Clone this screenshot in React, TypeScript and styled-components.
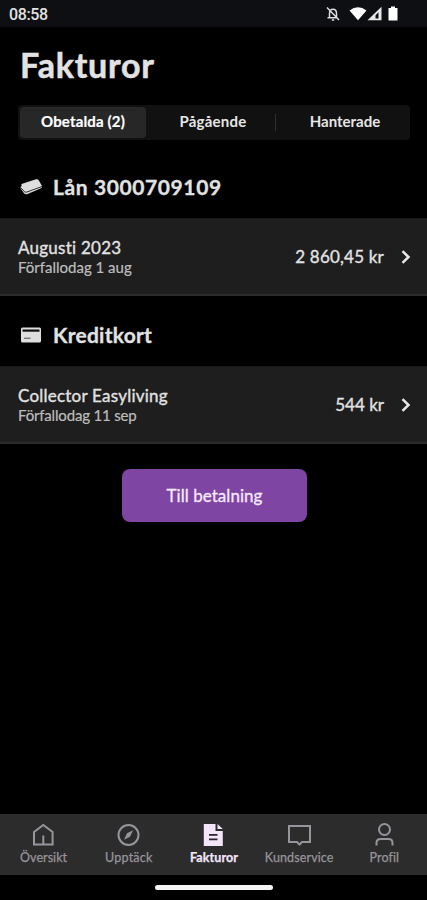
import React from "react";
import styled, { createGlobalStyle } from "styled-components";

const Global = createGlobalStyle`
  * { box-sizing: border-box; }
  body { margin: 0; background: #000; }
  button { font: inherit; border: 0; padding: 0; background: none; color: inherit; }
`;

const Screen = styled.div`
  width: 427px;
  height: 900px;
  display: flex;
  flex-direction: column;
  background: #000;
  color: #e2e2e2;
  font-family: Lato, "Open Sans", sans-serif;
  font-variant-ligatures: none;
  overflow: hidden;
`;

const StatusBar = styled.header`
  height: 27px;
  flex: none;
  display: flex;
  align-items: center;
  justify-content: space-between;
  padding: 1px 29px 0 9px;
  background: #0d0f12;
  font-family: Roboto, sans-serif;
`;

const Text = styled.span<{
  $size: number;
  $weight?: number;
  $spacing?: number;
  $line?: number;
  $color?: string;
  $stroke?: number;
}>`
  font-size: ${(p) => p.$size}px;
  font-weight: ${(p) => p.$weight ?? 400};
  letter-spacing: ${(p) => p.$spacing ?? 0}px;
  line-height: ${(p) => (p.$line ? `${p.$line}px` : "normal")};
  color: ${(p) => p.$color ?? "inherit"};
  -webkit-text-stroke: ${(p) => p.$stroke ?? 0}px currentColor;
  white-space: nowrap;
`;

const Main = styled.main`
  flex: 1;
  display: flex;
  flex-direction: column;
`;

const Title = styled.h1`
  margin: 0;
  height: 78px;
  padding: 0 20px 3px;
  display: flex;
  align-items: center;
`;

const Tabs = styled.div`
  height: 35px;
  margin: 0 17px 0 18px;
  padding: 2px 0 2px 2px;
  display: grid;
  grid-template-columns: 126px 1fr 1fr;
  border-radius: 4px;
  background: #111;
`;

const Tab = styled.button<{ $active?: boolean; $divided?: boolean }>`
  display: flex;
  align-items: center;
  justify-content: center;
  padding: 0 0 3px ${(p) => (p.$active ? 0 : 2)}px;
  border-radius: 4px;
  background: ${(p) => (p.$active ? "#272727" : "transparent")};
  color: ${(p) => (p.$active ? "#fff" : "#e6e6e6")};
  position: relative;
  &::after {
    content: "";
    position: absolute;
    top: 7px;
    right: 2px;
    height: 17px;
    width: 1px;
    background: ${(p) => (p.$divided ? "#303030" : "transparent")};
  }
`;

const SectionHead = styled.h2<{ $height: number; $top: number }>`
  margin: 0;
  height: ${(p) => p.$height}px;
  padding: ${(p) => p.$top}px 20px 0;
  display: flex;
  align-items: center;
  gap: 10px;
  svg { flex: none; }
`;

const Row = styled.div`
  height: 78px;
  padding: 0 15px 0 18px;
  display: flex;
  align-items: center;
  background: #1e1e1e;
  border-top: 1px solid #191919;
  border-bottom: 2px solid #2b2b2b;
`;

const RowLabel = styled.div`
  flex: 1;
  display: flex;
  flex-direction: column;
`;

const Chevron = styled.svg`
  margin-left: 16px;
`;

const PayButton = styled.button`
  width: 185px;
  height: 53px;
  margin: 25px 0 0 122px;
  display: flex;
  align-items: center;
  justify-content: center;
  border-radius: 8px;
  background: #7f45a2;
`;

const Nav = styled.nav`
  height: 61px;
  flex: none;
  padding-left: 1px;
  display: grid;
  grid-template-columns: repeat(5, 1fr);
  background: #2c2c2c;
`;

const NavItem = styled.button<{ $active?: boolean }>`
  display: flex;
  flex-direction: column;
  align-items: center;
  padding-top: 8px;
  gap: 3px;
  color: ${(p) => (p.$active ? "#f3e6fa" : "#97949b")};
`;

const HomeArea = styled.footer`
  height: 25px;
  flex: none;
  display: flex;
  justify-content: center;
  padding-top: 10px;
`;

const HomeBar = styled.div`
  width: 118px;
  height: 5px;
  border-radius: 3px;
  background: #f5f5f5;
`;

const StatusIcons = () => (
  <svg width="73" height="18" viewBox="0 0 73 18">
    <g fill="none" stroke="#ddd" strokeWidth="1.5">
      <path d="M4.500 12.500V8.500C4.500 5.500 6 4.200 8 4.200s3.500 1.300 3.500 4.300v4M2.500 12.800H12M2 2.500l12 12.500" />
      <path d="M6.800 15h2.400" />
    </g>
    <path d="M24.500 5.500Q33-1 41.500 5.500L33 15.200Z" fill="#fff" />
    <path fillRule="evenodd" d="M42.500 15.200 56.500 1.700v13.500ZM50.500 13.500h3V7.300L50.500 10.300Z" fill="#e8e8e8" />
    <path d="M63.500 3H66V1.500h4V3h2.500v12.500h-9Z" fill="#fff" />
  </svg>
);

const LoanIcon = () => (
  <svg width="23" height="18" viewBox="0 0 23 18">
    <path d="M1.500 6 16 1.300q2-.5 2.700 1L22 8q.6 1.500-1 2.200L7 16.200q-1.800.5-3-1L.6 10.500Q0 8.800 1.500 8.300Z" fill="#dedede" />
    <path d="m.8 9.700 3.600 4q1 .8 2.600.3L22 8.500" fill="none" stroke="#181818" strokeWidth=".9" />
  </svg>
);

const CardIcon = () => (
  <svg width="23" height="16" viewBox="0 0 23 16">
    <rect x="1" y="0.500" width="20" height="15" rx="1.500" fill="#dedede" />
    <path d="M2.500 3.600h17" stroke="#111" strokeWidth="2.200" />
    <path d="M4 11.300h6.500" stroke="#777" strokeWidth="1.400" />
  </svg>
);

const RowChevron = () => (
  <Chevron width="12" height="16" viewBox="0 0 12 16" fill="none">
    <path d="m2.500 2.200 6 5.800-6 5.800" stroke="#e8e8e8" strokeWidth="2.500" />
  </Chevron>
);

const icons: Record<string, React.ReactNode> = {
  home: <path d="M3 10 12.300 3l9.300 7v12.500H3ZM12.300 22v-8.500" />,
  compass: (
    <>
      <circle cx="12.500" cy="13" r="10" />
      <path d="m17 8.300-3 6.500-6 3 3-6.500Z" fill="currentColor" stroke="none" />
    </>
  ),
  invoice: (
    <>
      <path d="M2.800 2H14.500v7h7.300v15h-19Z" fill="currentColor" stroke="none" />
      <path d="M16.500 2v5h5.300Z" fill="currentColor" stroke="none" />
      <path d="M8 12.800h8.500M8 17.300h8.500" stroke="#29252c" strokeWidth="1.800" />
    </>
  ),
  chat: <path d="M2 4h21v16h-8l-2.500 2.500L10 20H2Z" />,
  profile: (
    <>
      <circle cx="12.500" cy="7.500" r="5.500" />
      <path d="M4.500 23.500V21q0-4 4-4h8q4 0 4 4v2.500" />
    </>
  ),
};

const navItems = [
  { label: "Översikt", icon: "home", spacing: 0.05 },
  { label: "Upptäck", icon: "compass", spacing: 0.2 },
  { label: "Fakturor", icon: "invoice", spacing: 0.1, active: true },
  { label: "Kundservice", icon: "chat", spacing: 0.12 },
  { label: "Profil", icon: "profile", spacing: 0.1 },
];

export default function App() {
  return (
    <>
      <Global />
      <Screen>
        <StatusBar>
          <Text $size={16} $weight={500} $spacing={-0.4}>08:58</Text>
          <StatusIcons />
        </StatusBar>
        <Main>
          <Title><Text $size={34} $weight={700} $spacing={0.75} $stroke={0.5}>Fakturor</Text></Title>
          <Tabs>
            <Tab $active><Text $size={15} $weight={700} $spacing={0.15} $stroke={0.2}>Obetalda (2)</Text></Tab>
            <Tab $divided><Text $size={15} $weight={700} $spacing={0.25}>Pågående</Text></Tab>
            <Tab><Text $size={15} $weight={700}>Hanterade</Text></Tab>
          </Tabs>
          <SectionHead $height={78} $top={15}>
            <LoanIcon />
            <Text $size={21} $weight={700} $spacing={0.6} $stroke={0.3}>Lån 3000709109</Text>
          </SectionHead>
          <Row>
            <RowLabel>
              <Text $size={17} $line={21} $spacing={0.25} $stroke={0.35}>Augusti 2023</Text>
              <Text $size={15} $line={19} $stroke={0.2} $color="#bdbdbd">Förfallodag 1 aug</Text>
            </RowLabel>
            <Text $size={17} $stroke={0.35} $spacing={0.2}>2 860,45 kr</Text>
            <RowChevron />
          </Row>
          <SectionHead $height={70} $top={7}>
            <CardIcon />
            <Text $size={21} $weight={700} $spacing={0.25} $stroke={0.3}>Kreditkort</Text>
          </SectionHead>
          <Row>
            <RowLabel>
              <Text $size={17} $line={21} $spacing={0.23} $stroke={0.35}>Collector Easyliving</Text>
              <Text $size={15} $line={19} $spacing={-0.17} $stroke={0.2} $color="#bdbdbd">Förfallodag 11 sep</Text>
            </RowLabel>
            <Text $size={17} $stroke={0.35}>544 kr</Text>
            <RowChevron />
          </Row>
          <PayButton><Text $size={17} $stroke={0.3} $spacing={0.05} $color="#f7e9ff">Till betalning</Text></PayButton>
        </Main>
        <Nav>
          {navItems.map((item) => (
            <NavItem key={item.label} $active={item.active}>
              <svg width="25" height="25" viewBox="0 0 25 25" fill="none" stroke="currentColor" strokeWidth="2">
                {icons[item.icon]}
              </svg>
              <Text $size={12.5} $weight={item.active ? 700 : 400} $stroke={0.25} $spacing={item.spacing}>{item.label}</Text>
            </NavItem>
          ))}
        </Nav>
        <HomeArea><HomeBar /></HomeArea>
      </Screen>
    </>
  );
}
